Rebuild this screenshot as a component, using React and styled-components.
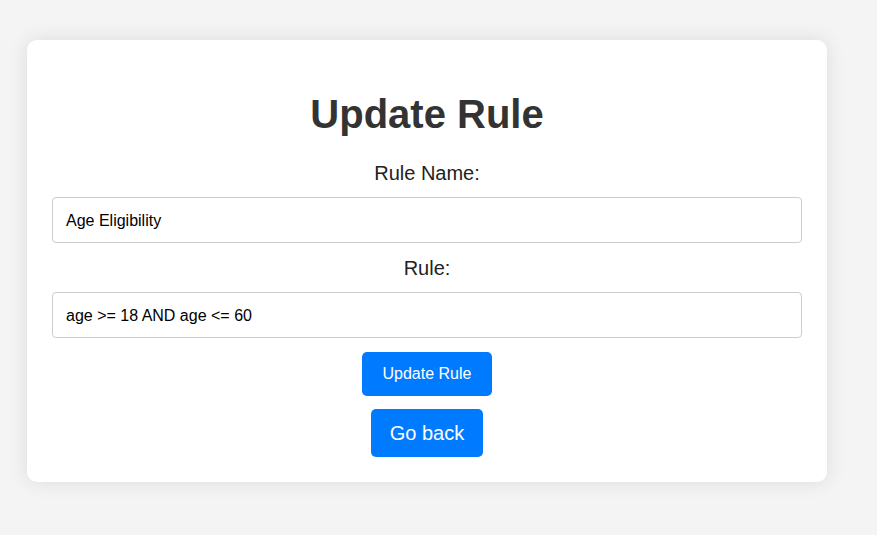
import styled, { createGlobalStyle } from "styled-components";

const GlobalStyle = createGlobalStyle`
  * { box-sizing: border-box; }
  body {
    margin: 0;
    background: #f4f4f4;
    font-family: Arial, "Liberation Sans", sans-serif;
  }
`;

export default function App() {
  return (
    <>
      <GlobalStyle />
      <PageStyled>
        <CardStyled>
          <TitleStyled>Update Rule</TitleStyled>
          <LabelStyled>Rule Name:</LabelStyled>
          <InputStyled defaultValue="Age Eligibility" />
          <LabelStyled>Rule:</LabelStyled>
          <InputStyled defaultValue="age >= 18 AND age <= 60" />
          <ButtonStyled>Update Rule</ButtonStyled>
          <ButtonStyled $big>Go back</ButtonStyled>
        </CardStyled>
      </PageStyled>
    </>
  );
}

const PageStyled = styled.div`
  min-height: 535px;
  padding: 40px 0 0 27px;
`;

const CardStyled = styled.div`
  width: 800px;
  background: #ffffff;
  border-radius: 10px;
  box-shadow: 0 0 20px rgba(0, 0, 0, 0.1);
  padding: 25px 25px 25px;
  display: flex;
  flex-direction: column;
  align-items: center;
`;

const TitleStyled = styled.h1`
  margin: 26px 0 25px;
  font-size: 40px;
  font-weight: bold;
  color: #333333;
  line-height: 46px;
`;

const LabelStyled = styled.label`
  font-size: 20px;
  line-height: 23px;
  color: #222222;
  margin-bottom: 12px;
`;

const InputStyled = styled.input`
  width: 100%;
  height: 46px;
  padding: 1px 13px 0;
  border: 1px solid #cccccc;
  border-radius: 4px;
  font-family: Arial, "Liberation Sans", sans-serif;
  font-size: 16px;
  color: #000000;
  margin-bottom: 14px;
  outline: none;
`;

const ButtonStyled = styled.button`
  background: #007bff;
  color: #ffffff;
  border: none;
  border-radius: 5px;
  font-family: Arial, "Liberation Sans", sans-serif;
  font-size: ${(p) => (p.$big ? "20px" : "16px")};
  height: ${(p) => (p.$big ? "48px" : "44px")};
  padding: 0 ${(p) => (p.$big ? "19px" : "21px")};
  margin-top: ${(p) => (p.$big ? "13px" : "0")};
  cursor: pointer;
`;
